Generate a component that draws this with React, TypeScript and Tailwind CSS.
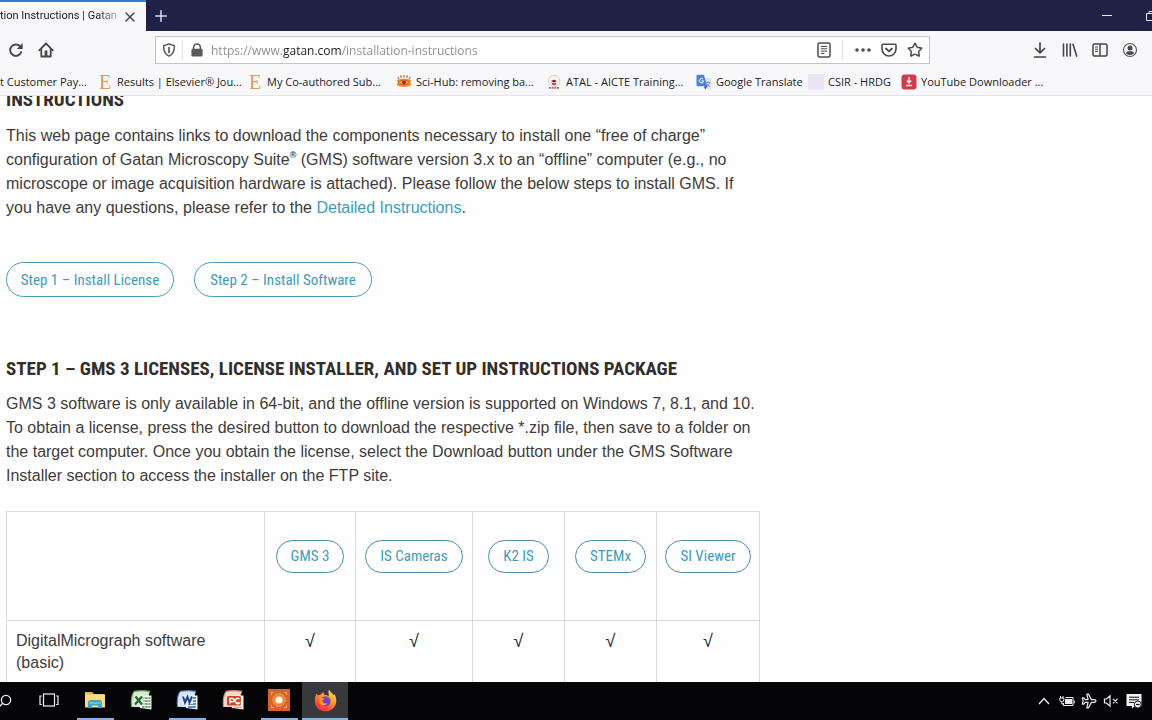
import type { ReactNode } from "react";
import { Star, X, Plus } from "lucide-react";

function ReloadIcon() {
  return (
    <svg viewBox="0 0 16 16" className="h-4 w-4" fill="none" stroke="#46464b" strokeWidth="1.9">
      <path d="M13.2 10.2A5.7 5.7 0 1 1 12 4.2" strokeLinecap="round" />
      <path d="M14.6 1v6H8.800z" fill="#46464b" stroke="none" />
    </svg>
  );
}

function HomeIcon() {
  return (
    <svg viewBox="0 0 16 16" className="h-4 w-4" fill="none" stroke="#46464b" strokeWidth="1.800" strokeLinejoin="round" strokeLinecap="round">
      <path d="M1.200 8.300 8 1.500l6.800 6.800" />
      <path d="M3.300 7.500v7h9.400v-7" />
      <path d="M8 8.500v5.500" strokeWidth="2.800" strokeLinecap="butt" />
    </svg>
  );
}

function ShieldIcon() {
  return (
    <svg viewBox="0 0 16 16" className="h-3.5 w-3.5" fill="none" stroke="#5a5a5f" strokeWidth="1.700" strokeLinejoin="round">
      <path d="M8 1.200 14.200 3c0 6-1.400 9.800-6.200 12C3.200 12.800 1.800 9 1.800 3z" />
      <path d="M8 4.500v7.200" strokeWidth="2" />
    </svg>
  );
}

function LockIcon() {
  return (
    <svg viewBox="0 0 14 16" className="h-3.5 w-3" fill="#5a5a5f">
      <path d="M3 7V5a4 4 0 0 1 8 0v2" fill="none" stroke="#5a5a5f" strokeWidth="1.900" />
      <rect x="0.500" y="6.500" width="13" height="9" rx="1.500" />
    </svg>
  );
}

function ReaderIcon() {
  return (
    <svg viewBox="0 0 16 16" className="h-4 w-4" fill="none" stroke="#4c4c50" strokeWidth="1.500">
      <rect x="2" y="1" width="12" height="14" rx="1.500" />
      <path d="M4.800 4.500h6.400M4.800 6.800h6.400M4.800 9.100h6.400M4.800 11.400h3.500" strokeWidth="1" />
    </svg>
  );
}

function PocketIcon() {
  return (
    <svg viewBox="0 0 16 16" className="h-4 w-4" fill="none" stroke="#4c4c50" strokeWidth="1.600" strokeLinecap="round" strokeLinejoin="round">
      <path d="M2 2.200h12a1 1 0 0 1 1 1V7a7 7 0 0 1-14 0V3.200a1 1 0 0 1 1-1z" />
      <path d="M5 6.500l3 2.800 3-2.800" strokeWidth="1.800" />
    </svg>
  );
}

function DownloadIcon() {
  return (
    <svg viewBox="0 0 16 16" className="h-4 w-4" fill="none" stroke="#46464b" strokeWidth="1.700" strokeLinecap="round" strokeLinejoin="round">
      <path d="M8 1v9.500M3.500 6.500 8 11l4.500-4.500M2.500 15h11" />
    </svg>
  );
}

function LibraryIcon() {
  return (
    <svg viewBox="0 0 16 16" className="h-4 w-4" fill="none" stroke="#46464b" strokeWidth="1.600" strokeLinecap="round">
      <path d="M1.500 2v12M4.900 2v12M8.300 2v12M11 2.300l3.700 11.700" />
    </svg>
  );
}

function SidebarIcon() {
  return (
    <svg viewBox="0 0 16 16" className="h-4 w-4" fill="none" stroke="#46464b" strokeWidth="1.500">
      <rect x="1" y="2" width="14" height="12" rx="1.500" />
      <path d="M8 2v12" />
      <path d="M3 5h3M3 7.200h3M3 9.400h3" strokeWidth="1" />
    </svg>
  );
}

function AccountIcon() {
  return (
    <svg viewBox="0 0 16 16" className="h-4 w-4" fill="#46464b">
      <circle cx="8" cy="8" r="6.500" fill="none" stroke="#55555a" strokeWidth="1.100" />
      <circle cx="8" cy="6" r="2.500" />
      <path d="M3.900 11.200C4.800 9.400 6.200 9.200 8 9.200s3.200.2 4.100 2A5.200 5.200 0 0 1 8 13a5.200 5.200 0 0 1-4.100-1.800z" />
    </svg>
  );
}

function SciHubIcon() {
  return (
    <svg viewBox="0 0 16 16" className="h-4 w-4">
      <path d="M3 5 1.800 3M5.300 3.800l-.8-2.300M8 3.400V1M10.700 3.800l.8-2.300M13 5l1.200-2" stroke="#c4512a" strokeWidth="1.200" />
      <path d="M.5 6.500C4 4 12 4 15.500 6.500L14 8.500l1.500 2.500C12 13.500 4 13.500 .5 11L2 8.500z" fill="#f08a2c" />
      <path d="M2 8.500c3.500-3 8.500-3 12 0-3.500 2.700-8.500 2.700-12 0z" fill="#f9b04f" stroke="#c4512a" strokeWidth="0.900" />
      <circle cx="8" cy="8.400" r="1.900" fill="#a52d17" />
    </svg>
  );
}

function AtalIcon() {
  return (
    <svg viewBox="0 0 16 16" className="h-4 w-4">
      <circle cx="8" cy="7" r="5.800" fill="#f8f2ec" stroke="#dccfc6" strokeWidth="0.900" />
      <path d="M5 7 8 5.800 11 7 8 8.500z" fill="#5b2a30" />
      <path d="M5.800 8.400 8 9.500l2.200-1.100v1.800L8 11.400l-2.200-1.200z" fill="#c9333b" />
      <path d="M3 13.800h10" stroke="#8d6a70" strokeWidth="1.800" strokeDasharray="1.900 .8" />
    </svg>
  );
}

function TranslateIcon() {
  return (
    <svg viewBox="0 0 16 16" className="h-4 w-4">
      <path d="M7 4h7.500a1 1 0 0 1 1 1v9.500a1 1 0 0 1-1 1H10z" fill="#dfe3ea" />
      <path d="M10 8.500h4.500M12.200 7.400v1.100M13.600 8.700c-.4 1.700-1.500 2.800-2.800 3.600M11 10c.7 1.200 1.600 1.900 2.800 2.400" stroke="#77818f" strokeWidth=".8" fill="none" />
      <path d="M1.500.8h6.300l3.600 11.400H1.500a1 1 0 0 1-1-1V1.800a1 1 0 0 1 1-1z" fill="#4a80db" />
      <path d="M8 12.200h3.400l-2.200 3.200z" fill="#2450a6" />
      <path d="M7 5.100A2.200 2.200 0 1 0 7.700 6.900H5.600" fill="none" stroke="#fff" strokeWidth="1" />
    </svg>
  );
}

function DownloaderIcon() {
  return (
    <svg viewBox="0 0 16 16" className="h-4 w-4">
      <rect x=".5" y=".5" width="15" height="15" rx="3" fill="#d43a4c" />
      <path d="M8 3v5M5.800 6.500 8 8.800l2.200-2.300M5 11.500h6" stroke="#fbe3e4" strokeWidth="1.500" fill="none" />
    </svg>
  );
}

const ElsevierIcon = () => (
  <span aria-hidden="true" className="w-4 text-center font-['Liberation_Serif',serif] text-xl leading-4 text-[#e39a58]">E</span>
);

const bookmarks: { label: string; icon: ReactNode; size: string }[] = [
  { label: "Results | Elsevier® Jou...", icon: <ElsevierIcon />, size: "w-[150px]" },
  { label: "My Co-authored Sub...", icon: <ElsevierIcon />, size: "w-[149px]" },
  { label: "Sci-Hub: removing ba...", icon: <SciHubIcon />, size: "w-[150px]" },
  { label: "ATAL - AICTE Training...", icon: <AtalIcon />, size: "w-[150px]" },
  { label: "Google Translate", icon: <TranslateIcon />, size: "w-[112px]" },
  { label: "CSIR - HRDG", icon: <span className="h-4 w-4 bg-[#ece4f5]" />, size: "w-[93px]" },
  { label: "YouTube Downloader ...", icon: <DownloaderIcon />, size: "w-[150px]" },
];

function IconButton({ label, children }: { label: string; children: ReactNode }) {
  return (
    <button aria-label={label} className="flex h-6 w-6 items-center justify-center">
      {children}
    </button>
  );
}

function ExplorerIcon() {
  return (
    <svg viewBox="0 0 20 20" className="h-5 w-5">
      <path d="M0 2h7l2 2h10.500v4H0z" fill="#e6b94c" />
      <rect x="0" y="4.500" width="20" height="13" fill="#f8dc83" />
      <path d="M3 18v-5.500a2.500 2.500 0 0 1 2.500-2.500h9a2.500 2.500 0 0 1 2.500 2.500V18h-4v-2.500H7V18z" fill="#3aa9c6" />
      <path d="M4 13h12" stroke="#7fd3e0" strokeWidth="1.200" />
    </svg>
  );
}

function OfficeIcon({ dark, light, children }: { dark: string; light: string; children: ReactNode }) {
  return (
    <svg viewBox="0 0 22 20" className="h-5 w-[22px]">
      <path d="M4 .8C9-.2 15 0 20.500.8L19 5v12H1C.2 11 1 4 4 .8z" fill={dark} />
      <path d="M4.500 2C10 1 15 1.200 19 2l-2 15.500-15-.8C1.500 11 2 5 4.500 2z" fill={light} />
      <path d="M10 5.500h11.500v14L10 18z" fill="#f5f7f6" />
      {children}
    </svg>
  );
}

function ExcelIcon() {
  return (
    <OfficeIcon dark="#5b9b55" light="#d8ead2">
      <path d="M12 8h8.500M12 11h8.500M12 14h8.500M12 17h8.500" stroke="#4c9347" strokeWidth="1.600" strokeDasharray="2.500 .7" />
      <path d="M4 6h9.500v9H4z" fill="#e2f0dc" />
      <path d="M5.500 6.500 12 14.500M12 6.500 5 14.500" stroke="#1d6b2c" strokeWidth="2.300" />
    </OfficeIcon>
  );
}

function WordIcon() {
  return (
    <OfficeIcon dark="#4b7cc4" light="#d6e4f6">
      <path d="M12 8h8M12 11h8M12 14h8M12 17h8" stroke="#3a66ad" strokeWidth="1.400" />
      <path d="M6 5h11v9H6z" fill="#e5eefa" />
      <path d="M7 6.500 9 12.500 11.500 7 13.500 12.500 16 6.500" stroke="#1f468f" strokeWidth="2" fill="none" />
    </OfficeIcon>
  );
}

function PowerPointIcon() {
  return (
    <OfficeIcon dark="#d98068" light="#f7d8cc">
      <rect x="5" y="6" width="14" height="9.500" rx="1.500" fill="#c9482a" />
      <path d="M8 13.500v-5h2.500a1.500 1.500 0 0 1 0 3.200H8M17.500 9a2.600 2.600 0 1 0 0 4h-2.500" stroke="#fff" strokeWidth="1.400" fill="none" />
      <path d="M11.500 17.200h8.500" stroke="#dd8a70" strokeWidth="1.100" />
    </OfficeIcon>
  );
}

function RecorderIcon() {
  return (
    <svg viewBox="0 0 22 22" className="h-[22px] w-[22px]">
      <rect width="22" height="22" fill="#d9622b" />
      <circle cx="11" cy="11" r="6.500" fill="#e9873f" />
      <circle cx="11" cy="11" r="3.600" fill="#fff6dc" />
      <path d="M3.500 6V3.500H6M16 3.500h2.500V6M18.500 16v2.500H16M6 18.500H3.500V16" fill="none" stroke="#ee9f6a" strokeWidth="1.100" />
      <circle cx="11" cy="11" r="6.500" fill="none" stroke="#ef9f60" strokeWidth="1" strokeDasharray="2 1.700" />
    </svg>
  );
}

function FirefoxIcon() {
  return (
    <svg viewBox="0 0 24 24" className="h-[23px] w-[23px]">
      <defs>
        <linearGradient id="flame" x1="0.8" y1="0" x2="0.2" y2="1">
          <stop offset="0" stopColor="#ffe14d" />
          <stop offset="0.450" stopColor="#ff9328" />
          <stop offset="0.750" stopColor="#fb4a3b" />
          <stop offset="1" stopColor="#e0235f" />
        </linearGradient>
      </defs>
      <path d="M2.800 4.800c.4 1 .9 1.600 1.500 2C5 6.200 6 6 7 6.100 8 4.500 9 3.800 10.200 3.500 9.800 4.500 10 5.500 10.800 6c2 .2 3.400.6 4.600 1.600C15.500 5 14.500 3 15.500.5c1 2.300 3.600 3.600 5 6.200.3-.6.300-1.300.2-2C22.600 7 23.500 9.800 23.200 13 22.600 19 18 23.300 12 23.300 5.600 23.300.8 18.400.8 12.400.8 9.500 1.400 7 2.800 4.800z" fill="url(#flame)" />
      <circle cx="12" cy="13" r="5.200" fill="#7542b8" />
      <path d="M6.200 10.300c1.800-1.200 3.800-.9 5.300.3-1.400.1-2.300.8-2.800 1.700.2 2.500 3.200 3.600 5.600 2.200-1.300 3-6.800 3.800-8.600.2-.7-1.500-.5-3.200.5-4.400z" fill="#ff9a2a" />
      <path d="M11 8.500c2.500-.8 5 .5 5.700 3" fill="none" stroke="#9c56d8" strokeWidth="1.300" />
    </svg>
  );
}

function TaskViewIcon() {
  return (
    <svg viewBox="0 0 20 16" className="h-4 w-5" fill="none" stroke="#f0f0f0" strokeWidth="1.200">
      <rect x="4.500" y="2" width="11" height="12" />
      <path d="M2.800 4H1v8.500h1.800M17.200 4H19v8.500h-1.800" />
    </svg>
  );
}

const apps: { label: string; icon: ReactNode; line: string; box: string }[] = [
  { label: "Task View", icon: <TaskViewIcon />, line: "", box: "" },
  { label: "File Explorer", icon: <ExplorerIcon />, line: "w-[37px]", box: "" },
  { label: "Excel", icon: <ExcelIcon />, line: "", box: "" },
  { label: "Word", icon: <WordIcon />, line: "w-[37px]", box: "" },
  { label: "PowerPoint", icon: <PowerPointIcon />, line: "", box: "" },
  { label: "Screen Recorder", icon: <RecorderIcon />, line: "w-[37px]", box: "" },
  { label: "Firefox", icon: <FirefoxIcon />, line: "w-full", box: "bg-[#37393d]" },
];

function Taskbar() {
  return (
    <footer className="flex h-[38px] shrink-0 items-stretch bg-[#050507]">
      <button aria-label="Search" className="flex w-[26px] items-center overflow-hidden">
        <svg viewBox="0 0 12 14" className="h-3.5 w-3" fill="none" stroke="#f0f0f0" strokeWidth="1.300">
          <circle cx="6" cy="6" r="4.600" />
          <path d="M2.700 9.300-1 13" />
        </svg>
      </button>
      {apps.map((app) => (
        <button key={app.label} aria-label={app.label} className={`flex w-[46px] flex-col items-center ${app.box}`}>
          <span className="flex flex-1 items-center justify-center">{app.icon}</span>
          <span className={`h-0.5 bg-[#82b4e2] ${app.line}`} />
        </button>
      ))}
      <div className="ml-auto flex items-center pr-1.5">
        <button aria-label="Show hidden icons" className="flex w-[22px] justify-center">
          <svg viewBox="0 0 12 8" className="h-2 w-3" fill="none" stroke="#eee" strokeWidth="1.300"><path d="M1 7 6 1.500 11 7" /></svg>
        </button>
        <button aria-label="Battery" className="flex w-[23px] justify-center">
          <svg viewBox="0 0 16 12" className="h-3 w-4" fill="none" stroke="#eee" strokeWidth="1">
            <path d="M1.500 1v2M4 1v2M.8 3h4v1.800a2 2 0 0 1-4 0zM2.800 6.800V9h2" />
            <path d="M6.500 2.500h7.500v8H4.500V8" />
            <rect x="6" y="4" width="7" height="5" fill="#eee" stroke="none" />
            <path d="M15.200 5.500v3" />
          </svg>
        </button>
        <button aria-label="Airplane mode" className="flex w-[22px] justify-center">
          <svg viewBox="0 0 16 16" className="h-4 w-4" fill="none" stroke="#eee" strokeWidth="1.200" strokeLinejoin="round">
            <path d="M15 8c0-.8-.8-1.400-2-1.400h-2.600L7.500 1.200H5.800l1.300 5.400H4.200L2.800 4.800H1.300L2.200 8l-.9 3.200h1.500l1.400-1.800h2.900l-1.300 5.400h1.700l2.900-5.400H13c1.200 0 2-.6 2-1.400z" />
          </svg>
        </button>
        <button aria-label="Volume muted" className="flex w-[22px] justify-center">
          <svg viewBox="0 0 16 14" className="h-3.5 w-4" fill="none" stroke="#eee" strokeWidth="1.200">
            <path d="M1.500 5h2L7 1.800v10.400L3.500 9h-2zM10 4.800l4.500 4.500M14.500 4.800 10 9.300" />
          </svg>
        </button>
        <button aria-label="Notifications" className="flex w-6 justify-center">
          <svg viewBox="0 0 16 16" className="h-4 w-4">
            <path d="M.5 1h15v12H9l-3 2.500V13H.5z" fill="#f2f2f2" />
            <path d="M3 4.200h10M3 6.800h10M3 9.400h5" stroke="#111" strokeWidth="1" />
            <circle cx="11.800" cy="11.500" r="3.500" fill="#f2f2f2" stroke="#111" strokeWidth="1" />
            <path d="M9.900 11.500h3.800" stroke="#111" strokeWidth="1.200" />
          </svg>
        </button>
      </div>
    </footer>
  );
}

const packages = [
  { name: "GMS 3", size: "w-[91px]" },
  { name: "IS Cameras", size: "w-[117px]" },
  { name: "K2 IS", size: "w-[92px]" },
  { name: "STEMx", size: "w-[92px]" },
  { name: "SI Viewer", size: "w-[103px]" },
];

export default function App() {
  return (
    <div className="flex h-screen flex-col overflow-hidden bg-[#fefefe] font-['Open_Sans',sans-serif] text-[#1c1c1e]">
      <header className="shrink-0 bg-[#f8f8fa]">
        <div className="flex h-[31px] items-stretch bg-[#1f2244]">
          <div className="flex w-[146px] items-center justify-between border-t-2 border-[#2f7fd6] bg-[#f8f8fa] pr-2">
            <span className="bg-[linear-gradient(90deg,#1c1c1e_98px,#1c1c1e30_120px)] bg-clip-text font-[Roboto,sans-serif] text-[11px] whitespace-nowrap text-transparent">
              tion Instructions | Gatan
            </span>
            <button aria-label="Close tab"><X className="h-4 w-4 text-[#444]" strokeWidth={2} /></button>
          </div>
          <button aria-label="New tab" className="px-1.5 text-[#dcdde8]"><Plus className="h-[18px] w-[18px]" strokeWidth={2} /></button>
          <div className="ml-auto flex items-center gap-8 overflow-hidden">
            <button aria-label="Minimize" className="h-4 w-3"><span className="block h-px w-2.5 bg-[#e6e6f0]" /></button>
            <button aria-label="Restore" className="w-1.5 overflow-hidden">
              <svg viewBox="0 0 6 10" className="h-2.5 w-1.5" fill="none" stroke="#e6e6f0">
                <path d="M6 2.500H.5v7H6M3 2.500V.5h3" />
              </svg>
            </button>
          </div>
        </div>
        <div className="flex h-[38px] items-center pr-2.5 pl-1">
          <div className="flex w-[151px] gap-1.5">
            <IconButton label="Reload"><ReloadIcon /></IconButton>
            <IconButton label="Home"><HomeIcon /></IconButton>
          </div>
          <div className="flex h-7 max-w-[775px] flex-1 items-center border border-[#c4c4c8] bg-white pr-0.5 pl-1.5">
            <ShieldIcon />
            <span className="ml-1.5 h-5 w-px bg-[#e2e2e4]" />
            <span className="ml-2"><LockIcon /></span>
            <input
              aria-label="Address"
              defaultValue="https://www.gatan.com/installation-instructions"
              className="ml-2 min-w-0 flex-1 bg-[linear-gradient(90deg,#8b8b8e_72px,#1c1c1e_72px,#1c1c1e_131px,#8b8b8e_131px)] bg-clip-text pt-0.5 text-xs text-transparent outline-none"
            />
            <IconButton label="Reader view"><ReaderIcon /></IconButton>
            <span className="ml-1.5 h-5 w-px bg-[#e2e2e4]" />
            <span className="ml-2 flex gap-0.5">
              <IconButton label="Page actions">
                <svg viewBox="0 0 16 4" className="h-1 w-4" fill="#4c4c50"><circle cx="2" cy="2" r="1.800" /><circle cx="8" cy="2" r="1.800" /><circle cx="14" cy="2" r="1.800" /></svg>
              </IconButton>
              <IconButton label="Save to Pocket"><PocketIcon /></IconButton>
              <IconButton label="Bookmark"><Star className="h-4 w-4 text-[#4c4c50]" strokeWidth={2.300} /></IconButton>
            </span>
          </div>
          <div className="ml-auto flex gap-1.5">
            <IconButton label="Downloads"><DownloadIcon /></IconButton>
            <IconButton label="Library"><LibraryIcon /></IconButton>
            <IconButton label="Sidebar"><SidebarIcon /></IconButton>
            <IconButton label="Account"><AccountIcon /></IconButton>
          </div>
        </div>
        <nav className="flex h-[27px] items-center border-b border-[#e4e4e7] text-[11px] whitespace-nowrap">
          <a href="#payments" className="w-[97px] shrink-0">t Customer Pay...</a>
          {bookmarks.map((b) => (
            <a key={b.label} href="#bookmark" className={`flex shrink-0 items-center gap-1 ${b.size}`}>
              {b.icon}
              <span>{b.label}</span>
            </a>
          ))}
        </nav>
      </header>

      <main className="min-h-0 flex-1 overflow-hidden pl-1.5 font-['Liberation_Sans',sans-serif] text-base leading-6 text-[#403c3a]">
        <h2 className="-mt-2 mb-3 font-['Roboto_Condensed',Roboto,sans-serif] text-[19px] leading-6 font-bold text-[#332e2b]">INSTRUCTIONS</h2>
        <p className="whitespace-nowrap">
          This web page contains links to download the components necessary to install one “free of charge”<br />
          configuration of Gatan Microscopy Suite<sup className="static align-[7px] text-[9px] font-bold">®</sup> (GMS) software version 3.x to an “offline” computer (e.g., no<br />
          microscope or image acquisition hardware is attached). Please follow the below steps to install GMS. If<br />
          you have any questions, please refer to the <a href="#details" className="text-[#3a9fbd]">Detailed Instructions</a>.
        </p>
        <div className="mt-[42px] flex gap-5 font-['Roboto_Condensed',Roboto,sans-serif] text-[15px] text-[#3f9cb8]">
          <button className="h-[35px] w-[168px] rounded-full border border-[#4a9db5]">Step 1 – Install License</button>
          <button className="h-[35px] w-[178px] rounded-full border border-[#4a9db5]">Step 2 – Install Software</button>
        </div>
        <h2 className="mt-[60px] mb-[11px] font-['Roboto_Condensed',Roboto,sans-serif] text-[19px] leading-6 font-bold whitespace-nowrap text-[#332e2b]">
          STEP 1 – GMS 3 LICENSES, LICENSE INSTALLER, AND SET UP INSTRUCTIONS PACKAGE
        </h2>
        <p className="whitespace-nowrap">
          GMS 3 software is only available in 64-bit, and the offline version is supported on Windows 7, 8.1, and 10.<br />
          To obtain a license, press the desired button to download the respective *.zip file, then save to a folder on<br />
          the target computer. Once you obtain the license, select the Download button under the GMS Software<br />
          Installer section to access the installer on the FTP site.
        </p>
        <table className="mt-[23px] w-[753px] table-fixed border-collapse leading-[22px]">
          <thead>
            <tr className="h-[109px]">
              <th className="w-[258px] border border-[#dcdcde]" />
              {packages.map((p) => (
                <th key={p.name} className={`border border-[#dcdcde] pb-5 font-normal ${p.size}`}>
                  <button className="h-[33px] rounded-full border border-[#4a8ea3] px-3.5 font-['Roboto_Condensed',Roboto,sans-serif] text-[15px] whitespace-nowrap text-[#3f9cb8]">{p.name}</button>
                </th>
              ))}
            </tr>
          </thead>
          <tbody>
            <tr className="h-[66px] align-top">
              <td className="border border-[#dcdcde] px-[9px] py-[9px]">DigitalMicrograph software<br />(basic)</td>
              {packages.map((p) => (
                <td key={p.name} className="border border-[#dcdcde] py-[9px] text-center text-lg leading-[22px] text-[#222]">√</td>
              ))}
            </tr>
          </tbody>
        </table>
      </main>
      <Taskbar />
    </div>
  );
}
